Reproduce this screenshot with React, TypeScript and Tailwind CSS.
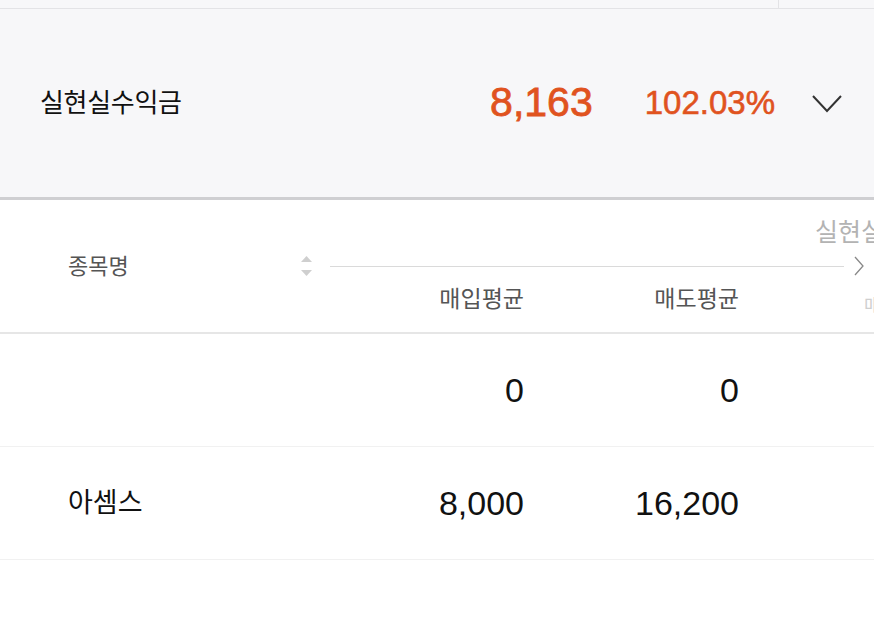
import React from 'react';

const font = { fontFamily: '"Liberation Sans", "Noto Sans CJK KR", sans-serif' };

interface RowData {
  name: string;
  buyAvg: string;
  sellAvg: string;
}

const rows: RowData[] = [
  { name: '', buyAvg: '0', sellAvg: '0' },
  { name: '아셈스', buyAvg: '8,000', sellAvg: '16,200' },
];

// Small up/down sort arrows next to a column title
const SortIcon = () => (
  <svg width="13" height="20" viewBox="0 0 13 20" className="shrink-0">
    <path d="M6.5 0 L12 6 L1 6 Z" fill="#cfcfcf" />
    <path d="M1 14 L12 14 L6.5 20 Z" fill="#cfcfcf" />
  </svg>
);

const App: React.FC = () => {
  return (
    <div className="w-[874px] h-[625px] overflow-hidden bg-white text-[#111]" style={font}>
      {/* top strip */}
      <div className="h-[9px] flex bg-[#f7f7f9] border-b border-[#e3e3e6]">
        <div className="w-[779px] border-r border-[#e3e3e6]" />
      </div>

      {/* summary */}
      <div className="h-[191px] flex items-center bg-[#f7f7f9] border-b-[3px] border-[#cfcfd2] pl-[40px] pr-[32px]">
        <span className="text-[26px] tracking-[-0.3px]">실현실수익금</span>
        <span className="ml-auto text-[41px] text-[#e0531f] [-webkit-text-stroke:0.8px_#e0531f]">8,163</span>
        <span className="ml-[52px] text-[33px] text-[#e0531f] [-webkit-text-stroke:0.6px_#e0531f]">102.03%</span>
        <svg width="30" height="18" viewBox="0 0 30 18" className="ml-[37px] mt-[2px]">
          <polyline points="1,1 15,16 29,1" fill="none" stroke="#333" strokeWidth="2" />
        </svg>
      </div>

      {/* table header */}
      <div className="h-[134px] flex border-b-2 border-[#e6e6e6]">
        <div className="w-[330px] flex items-center pl-[68px] pr-[17px]">
          <span className="text-[22px] text-[#555]">종목명</span>
          <span className="ml-auto">
            <SortIcon />
          </span>
        </div>
        <div className="flex-1 flex flex-col overflow-hidden">
          <div className="h-[66px] flex items-center pl-[485px]">
            <span className="text-[25px] text-[#b3b3b3] whitespace-nowrap">실현실수익금</span>
          </div>
          <div className="relative h-px bg-[#dadada] mr-[30px]">
            <svg width="10" height="20" viewBox="0 0 10 20" className="absolute -right-[20px] -top-[10px]">
              <polyline points="1,1 9,10 1,19" fill="none" stroke="#888" strokeWidth="1.3" />
            </svg>
          </div>
          <div className="flex-1 flex items-center text-[23px] text-[#555] whitespace-nowrap">
            <span className="w-[194px] shrink-0 text-right">매입평균</span>
            <span className="w-[215px] shrink-0 text-right">매도평균</span>
            <span className="shrink-0 ml-[125px] mt-[14px] text-[18px] text-[#cfcfcf]">매도</span>
          </div>
        </div>
      </div>

      {/* rows */}
      {rows.map((r, i) => (
        <div key={i} className="h-[113px] flex items-center border-b border-[#f1f1f1]">
          <div className="w-[330px] pl-[68px] text-[27px]">{r.name}</div>
          <div className="w-[194px] text-right text-[34px]">{r.buyAvg}</div>
          <div className="w-[215px] text-right text-[34px]">{r.sellAvg}</div>
        </div>
      ))}
    </div>
  );
};

export default App;
